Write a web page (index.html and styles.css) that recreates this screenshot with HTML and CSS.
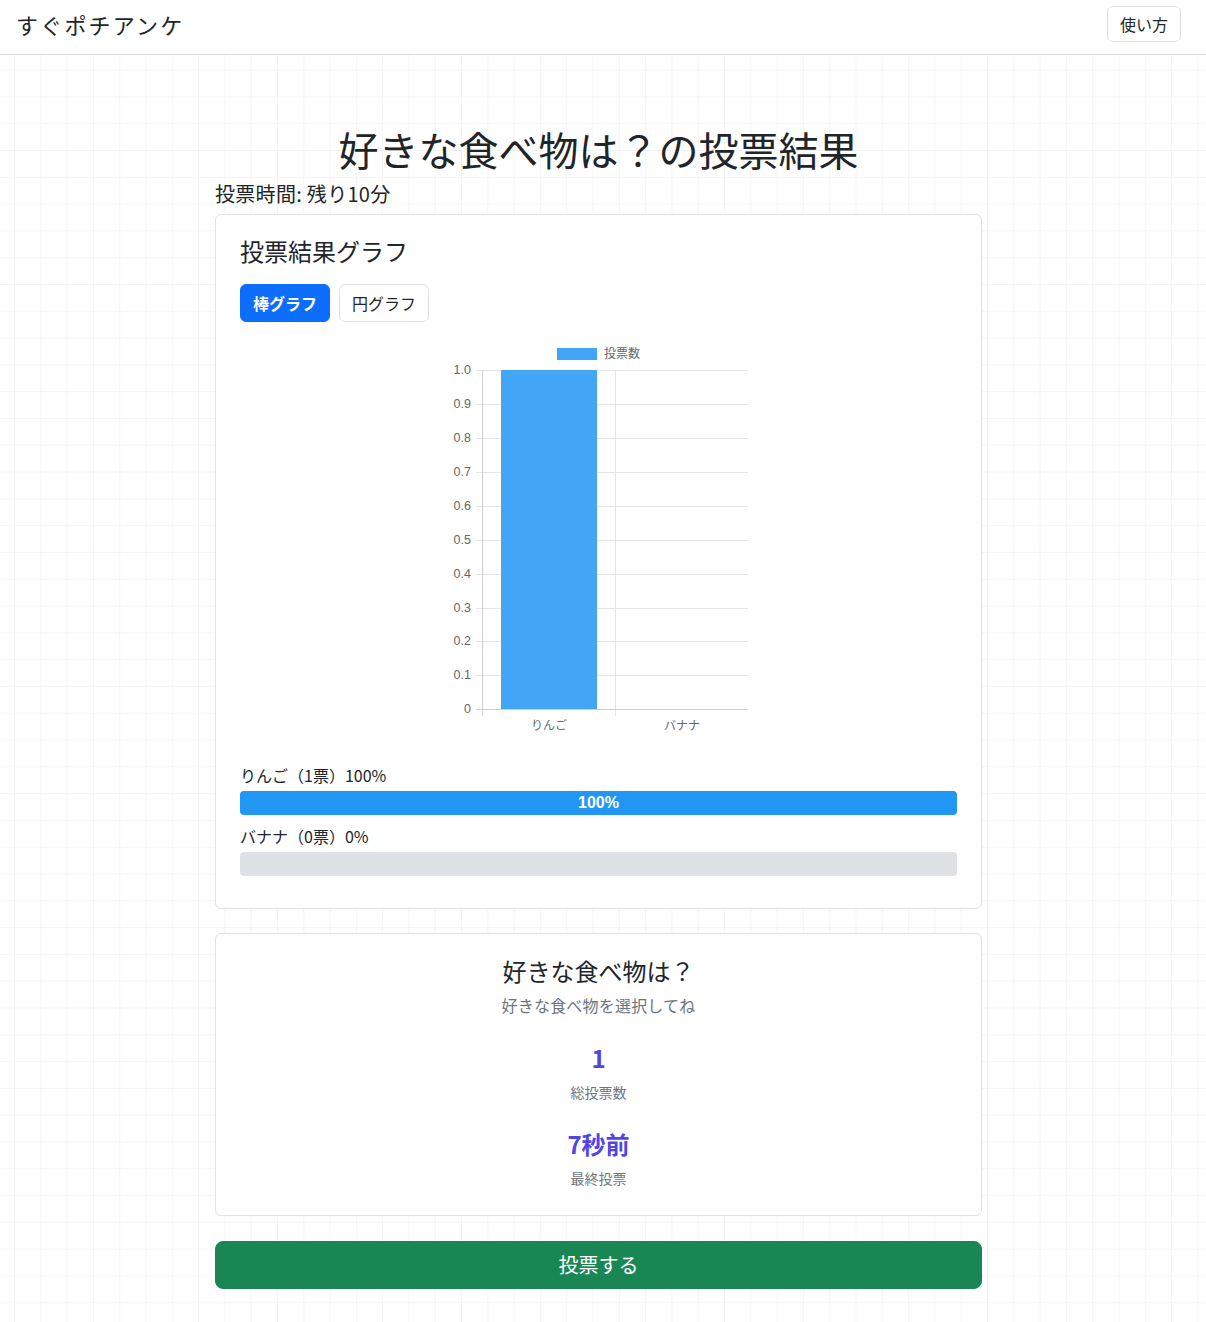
FILE: index.html
```html
<!DOCTYPE html>
<html lang="ja">
<head>
    <meta charset="UTF-8">
    <meta name="viewport" content="width=device-width, initial-scale=1.0">
    <title>すぐポチアンケ</title>
    <link rel="stylesheet" href="styles.css">
</head>
<body>
    <nav class="navbar">
        <span class="brand">すぐポチアンケ</span>
        <button class="btn btn-outline">使い方</button>
    </nav>

    <main class="main">
        <div class="container">
            <h1 class="page-title">好きな食べ物は？の投票結果</h1>
            <p class="time-left">投票時間: 残り10分</p>

            <section class="card">
                <h2 class="card-title">投票結果グラフ</h2>
                <div class="toggle">
                    <button class="btn btn-primary">棒グラフ</button>
                    <button class="btn btn-outline">円グラフ</button>
                </div>

                <svg class="chart" width="330" height="420" viewBox="0 0 330 420" xmlns="http://www.w3.org/2000/svg">
                    <!-- legend -->
                    <rect x="123" y="18" width="40" height="12" fill="#42a5f5"/>
                    <text x="170" y="28" class="chart-legend">投票数</text>

                    <!-- horizontal grid -->
                    <g stroke="#e6e6e6" stroke-width="1">
                        <line x1="42" y1="40.5" x2="314" y2="40.5"/>
                        <line x1="42" y1="74.5" x2="314" y2="74.5"/>
                        <line x1="42" y1="108.5" x2="314" y2="108.5"/>
                        <line x1="42" y1="142.5" x2="314" y2="142.5"/>
                        <line x1="42" y1="176.5" x2="314" y2="176.5"/>
                        <line x1="42" y1="210.5" x2="314" y2="210.5"/>
                        <line x1="42" y1="244.5" x2="314" y2="244.5"/>
                        <line x1="42" y1="278.5" x2="314" y2="278.5"/>
                        <line x1="42" y1="311.5" x2="314" y2="311.5"/>
                        <line x1="42" y1="345.5" x2="314" y2="345.5"/>
                        <line x1="181.5" y1="40" x2="181.5" y2="386"/>
                    </g>
                    <g stroke="#d0d0d0" stroke-width="1">
                        <line x1="42" y1="379.5" x2="314" y2="379.5"/>
                        <line x1="48.5" y1="40" x2="48.5" y2="386"/>
                    </g>

                    <!-- y labels -->
                    <g class="chart-tick" text-anchor="end">
                        <text x="37" y="44">1.0</text>
                        <text x="37" y="78">0.9</text>
                        <text x="37" y="112">0.8</text>
                        <text x="37" y="146">0.7</text>
                        <text x="37" y="180">0.6</text>
                        <text x="37" y="214">0.5</text>
                        <text x="37" y="248">0.4</text>
                        <text x="37" y="282">0.3</text>
                        <text x="37" y="315">0.2</text>
                        <text x="37" y="349">0.1</text>
                        <text x="37" y="383">0</text>
                    </g>

                    <!-- bars -->
                    <rect x="67" y="40" width="96" height="339" fill="#42a5f5"/>

                    <!-- x labels -->
                    <g class="chart-label" text-anchor="middle">
                        <text x="115" y="400">りんご</text>
                        <text x="248" y="400">バナナ</text>
                    </g>
                </svg>

                <div class="result">
                    <p class="result-label">りんご（1票）100%</p>
                    <div class="progress">
                        <div class="progress-bar" style="width: 100%">100%</div>
                    </div>
                </div>
                <div class="result">
                    <p class="result-label">バナナ（0票）0%</p>
                    <div class="progress">
                        <div class="progress-bar" style="width: 0%"></div>
                    </div>
                </div>
            </section>

            <section class="card card-summary">
                <h3 class="poll-title">好きな食べ物は？</h3>
                <p class="poll-desc">好きな食べ物を選択してね</p>

                <div class="stat">
                    <div class="stat-value">1</div>
                    <div class="stat-label">総投票数</div>
                </div>
                <div class="stat">
                    <div class="stat-value">7秒前</div>
                    <div class="stat-label">最終投票</div>
                </div>
            </section>

            <button class="btn btn-success btn-block">投票する</button>
        </div>
    </main>
</body>
</html>
```

FILE: styles.css
```css
body {
    font-family: "Noto Sans CJK JP", "Noto Sans", sans-serif;
    color: #212529;
    margin: 0;
    background-color: #fff;
    background-image:
        linear-gradient(to right, #f4f4f4 1px, transparent 1px),
        linear-gradient(to bottom, #f4f4f4 1px, transparent 1px);
    background-size: 26.3px 26.8px;
    background-position: 14px 16px;
    min-height: 1322px;
}
.navbar {
    display: flex;
    justify-content: space-between;
    align-items: center;
    padding: 0 25px 6px 16px;
    box-sizing: border-box;
    height: 55px;
    background-color: #fff;
    border-bottom: 1px solid #dcdcdc;
}
.brand {
    font-size: 22px;
    letter-spacing: 2.2px;
    line-height: 1;
}
.btn {
    font-family: inherit;
    font-size: 16px;
    line-height: 24px;
    padding: 6px 12px;
    border-radius: 6px;
    border: 1px solid transparent;
    cursor: pointer;
}
.navbar .btn {
    padding: 5px 12px;
}
.btn-outline {
    background-color: #fff;
    color: #212529;
    border-color: #dee2e6;
}
.btn-primary {
    background-color: #0d6efd;
    border-color: #0d6efd;
    color: #fff;
    font-weight: bold;
}
.btn-success {
    background-color: #198754;
    border-color: #198754;
    color: #fff;
}
.btn-block {
    display: block;
    width: 100%;
    font-size: 20px;
    line-height: 30px;
    padding: 8px 16px;
    border-radius: 8px;
    margin-top: 25px;
}
.main {
    padding: 70px 9px 32px 0;
}
.container {
    max-width: 767px;
    margin: 0 auto;
}
.page-title {
    font-size: 40px;
    font-weight: normal;
    line-height: 48px;
    text-align: center;
    margin: 0;
}
.time-left {
    font-size: 20px;
    line-height: 30px;
    letter-spacing: 0.3px;
    margin: 6px 0 5px;
}
.card {
    background-color: #fff;
    border: 1px solid #dee2e6;
    border-radius: 6px;
    padding: 24px;
}
.card-title {
    font-size: 24px;
    font-weight: normal;
    line-height: 29px;
    margin: -3px 0 19px;
}
.toggle {
    display: flex;
    gap: 9px;
}
.chart {
    display: block;
    margin: 8px auto 13px;
    font-family: "Liberation Sans", "Noto Sans CJK JP", sans-serif;
}
.chart-legend {
    font-size: 12px;
    fill: #666;
}
.chart-tick {
    font-size: 12.5px;
    fill: #666;
}
.chart-label {
    font-size: 12px;
    fill: #666;
}
.result-label {
    font-size: 16px;
    line-height: 24px;
    margin: 0 0 4px;
}
.result + .result {
    margin-top: 9px;
}
.progress {
    height: 24px;
    background-color: #dee2e6;
    border-radius: 4px;
    overflow: hidden;
    margin-bottom: 8px;
}
.progress-bar {
    height: 100%;
    background-color: #2196f3;
    color: #fff;
    font-family: "Liberation Sans", sans-serif;
    font-weight: bold;
    font-size: 16px;
    line-height: 24px;
    text-align: center;
}
.card-summary {
    margin-top: 24px;
    text-align: center;
    padding-top: 22px;
    padding-bottom: 26px;
}
.poll-title {
    font-size: 24px;
    font-weight: normal;
    line-height: 29px;
    margin: 0 0 8px;
}
.poll-desc {
    font-size: 16px;
    line-height: 24px;
    color: #6c757d;
    letter-spacing: 0.2px;
    margin: 0;
}
.stat {
    margin-top: 26px;
}
.stat-value {
    font-size: 24px;
    font-weight: bold;
    line-height: 29px;
    color: #4f46e5;
    margin-bottom: 10px;
}
.stat-label {
    font-size: 14px;
    line-height: 21px;
    color: #6c757d;
}
```
